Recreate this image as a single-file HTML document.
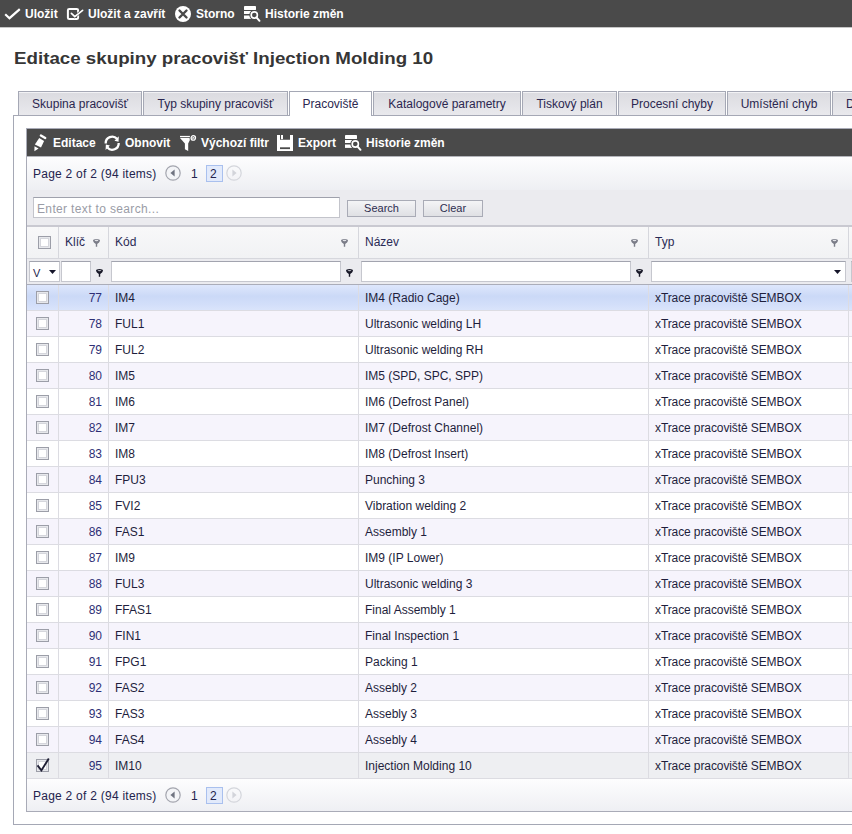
<!DOCTYPE html><html><head><meta charset="utf-8"><style>
*{box-sizing:border-box;margin:0;padding:0}
html,body{width:852px;height:834px;overflow:hidden;background:#fff;font-family:"Liberation Sans",sans-serif;position:relative}
.a{position:absolute}
svg{position:absolute;overflow:visible}
#topbar{left:0;top:0;width:852px;height:28px;background:#4a4a4a;border-bottom:1px solid #c6c6c6}
.tb{position:absolute;color:#fff;font-weight:bold;font-size:12px;line-height:14px;white-space:nowrap}
h1{position:absolute;left:14px;top:48px;font-size:17px;font-weight:bold;color:#363636;white-space:nowrap;line-height:22px;transform:scaleX(1.102);transform-origin:0 0}
.tab{position:absolute;top:91px;height:24px;border:1px solid #a5a8b5;border-bottom:none;background:linear-gradient(#dbdbe0,#e9e9ed);font-size:12px;color:#2b2750;text-align:center;line-height:24px;white-space:nowrap;box-shadow:inset 0 1px 0 #f2f2f5}
.tab.act{background:#fff;box-shadow:none;height:25px}
#panel{left:13px;top:115px;width:900px;height:710px;border:1px solid #a5a8b5;background:#fff}
#grid{left:26px;top:128px;width:900px;height:684px;border:1px solid #a9abb7;border-right:none;background:#fff;overflow:hidden}
#gtool{left:0;top:0;width:100%;height:28px;background:#4a4a4a;border-bottom:1px solid #b4b5bb}
.gt{position:absolute;color:#fff;font-weight:bold;font-size:12px;line-height:14px;white-space:nowrap;top:7px}
.pager{position:absolute;left:0;width:100%;background:linear-gradient(#fdfdfe,#eeeff3)}
.ptxt{position:absolute;font-size:12px;color:#23234d;white-space:nowrap;line-height:14px}
.ph{letter-spacing:0.35px}
.pl{letter-spacing:0.25px}
#search{left:0;top:61px;width:100%;height:37px;background:#ebebef;border-bottom:2px solid #c9c9d1}
#hdr{left:0;top:98px;width:100%;height:32px;background:linear-gradient(#f8f8f9,#f1f2f4);border-bottom:1px solid #d6d7dd}
#flt{left:0;top:130px;width:100%;height:26px;background:#ebebef;border-bottom:1px solid #abadb9}
.row{position:absolute;left:0;width:100%;height:26px;border-bottom:1px solid #dcdce2}
.c{position:absolute;top:0;height:25px;font-size:12px;color:#1e1e3c;line-height:27px;white-space:nowrap;border-right:1px solid #dcdce2;overflow:hidden}
.hc{position:absolute;top:0;height:31px;font-size:12px;color:#2a2a55;line-height:31px;white-space:nowrap;border-right:1px solid #d6d7dd}
.fb{position:absolute;top:2px;height:21px;background:#fff;border:1px solid #c6c7ce;border-top-color:#a2a4af}
.cb{position:absolute;width:13px;height:13px;border:1px solid #9c9ea8;background:#fff;box-shadow:inset 0 0 0 1px #e7e8ec,inset 0 0 0 2px #d5d6dc}
.btn{position:absolute;top:10px;height:17px;border:1px solid #a9abb6;background:linear-gradient(#f4f4f6,#dfe0e4);font-size:11px;color:#2e2e50;text-align:center;line-height:15px}
</style></head><body>
<div id="topbar" class="a"></div>
<svg style="left:4px;top:8px" width="17" height="12" viewBox="0 0 17 12"><path d="M1.2 6.2 L5.5 10.2 L15.8 1.2" fill="none" stroke="#fff" stroke-width="2.2"/></svg>
<svg style="left:66px;top:7px" width="18" height="14" viewBox="0 0 18 14"><rect x="1.9" y="1.9" width="10.2" height="10.2" rx="1.4" fill="none" stroke="#fff" stroke-width="2"/><path d="M5.4 6.4 L8.8 9.6 L16.6 3.4" fill="none" stroke="#4a4a4a" stroke-width="2.9"/><path d="M5.4 6.4 L8.8 9.6 L16.6 3.4" fill="none" stroke="#fff" stroke-width="1.7" stroke-linecap="round"/></svg>
<svg style="left:175px;top:6px" width="16" height="16" viewBox="0 0 16 16"><circle cx="8" cy="8" r="8" fill="#fff"/><path d="M4.5 4.5 L11.5 11.5 M11.5 4.5 L4.5 11.5" stroke="#4a4a4a" stroke-width="2.4" stroke-linecap="round"/></svg>
<svg style="left:243px;top:5px" width="18" height="18" viewBox="0 0 18 18"><rect x="1" y="1" width="12" height="3.9" rx="0.4" fill="#fff"/><rect x="1" y="6" width="7" height="3" fill="#fff"/><rect x="1" y="10.5" width="7" height="3.4" fill="#fff"/><circle cx="11.3" cy="10" r="5" fill="#4a4a4a"/><circle cx="11.3" cy="10" r="3.1" fill="none" stroke="#fff" stroke-width="1.6"/><path d="M13.4 12.3 L16.5 15.8" stroke="#fff" stroke-width="2" stroke-linecap="round"/></svg>
<div class="tb" style="left:25px;top:7px">Uložit</div>
<div class="tb" style="left:88px;top:7px">Uložit a zavřít</div>
<div class="tb" style="left:196px;top:7px">Storno</div>
<div class="tb" style="left:265px;top:7px">Historie změn</div>
<h1>Editace skupiny pracovišť Injection Molding 10</h1>
<div id="panel" class="a"></div>
<div class="tab" style="left:18px;width:124px">Skupina pracovišť</div>
<div class="tab" style="left:143px;width:145px">Typ skupiny pracovišť</div>
<div class="tab act" style="left:289px;width:83px">Pracoviště</div>
<div class="tab" style="left:373px;width:148px">Katalogové parametry</div>
<div class="tab" style="left:522px;width:95px">Tiskový plán</div>
<div class="tab" style="left:618px;width:108px">Procesní chyby</div>
<div class="tab" style="left:727px;width:104px">Umístění chyb</div>
<div class="tab" style="left:832px;width:104px;text-align:left;padding-left:13px">Dokumenty</div>
<div id="grid" class="a">
<div id="gtool" class="a"></div>
<svg style="left:5px;top:4px" width="16" height="20" viewBox="0 0 16 20"><path d="M7.2 4.9 L12.1 8.1 L9 14.4 L2.9 11.5 Z" fill="#fff"/><path d="M8.9 2.5 L13.2 5" stroke="#fff" stroke-width="2.4" stroke-linecap="round"/><path d="M2.5 13.2 L6.6 15.6 L2.4 18.2 Z" fill="#fff"/></svg>
<svg style="left:77px;top:6px" width="17" height="17" viewBox="0 0 17 17"><path d="M1.70 8.43 A6.5 6.5 0 0 1 13.03 3.85 M14.70 7.97 A6.5 6.5 0 0 1 3.37 12.55" fill="none" stroke="#fff" stroke-width="2.3"/><path d="M10.49 5.83 L14.80 1.37 L14.56 6.85 Z M5.91 10.57 L1.60 15.03 L1.84 9.55 Z" fill="#fff"/></svg>
<svg style="left:152px;top:5px" width="18" height="18" viewBox="0 0 18 18"><rect x="1" y="1.9" width="10" height="1.3" fill="#fff"/><path d="M1 4 H10.8 V6.3 L9.2 9.5 V17 L5.9 15.2 V9.5 Z" fill="#fff"/><circle cx="14.3" cy="3.9" r="3.6" fill="#4a4a4a"/><circle cx="14.3" cy="3.9" r="2.2" fill="none" stroke="#fff" stroke-width="1.3"/><path d="M13.3 2.9 L15.3 4.9 M15.3 2.9 L13.3 4.9" stroke="#fff" stroke-width="0.9"/></svg>
<svg style="left:250px;top:6px" width="16" height="16" viewBox="0 0 16 16"><path d="M0 0 H3 V4.8 H13 V0 H16 V16 H0 Z" fill="#fff"/><rect x="4" y="0" width="2" height="4.2" fill="#fff"/><rect x="3" y="12.3" width="10" height="1.8" fill="#4a4a4a"/></svg>
<svg style="left:317px;top:5px" width="18" height="18" viewBox="0 0 18 18"><rect x="1" y="1" width="12" height="3.9" rx="0.4" fill="#fff"/><rect x="1" y="6" width="7" height="3" fill="#fff"/><rect x="1" y="10.5" width="7" height="3.4" fill="#fff"/><circle cx="11.3" cy="10" r="5" fill="#4a4a4a"/><circle cx="11.3" cy="10" r="3.1" fill="none" stroke="#fff" stroke-width="1.6"/><path d="M13.4 12.3 L16.5 15.8" stroke="#fff" stroke-width="2" stroke-linecap="round"/></svg>
<div class="gt" style="left:26px">Editace</div>
<div class="gt" style="left:98px">Obnovit</div>
<div class="gt" style="left:174px">Výchozí filtr</div>
<div class="gt" style="left:271px">Export</div>
<div class="gt" style="left:339px">Historie změn</div>
<svg width="0" height="0"><defs><linearGradient id="cg" x1="0" y1="0" x2="0" y2="1"><stop offset="0" stop-color="#fff"/><stop offset="1" stop-color="#e4e5ea"/></linearGradient></defs></svg>
<div class="pager" style="top:28px;height:33px"><div class="ptxt pl" style="left:6px;top:10px">Page 2 of 2 (94 items)</div><svg style="left:138px;top:8px" width="16" height="16" viewBox="0 0 16 16"><circle cx="8" cy="8" r="7.2" fill="#f3f4f7" stroke="#a3a5ae" stroke-width="1.2"/><path d="M9.6 4.6 V11.4 L5.4 8 Z" fill="#6f7380"/></svg><div class="ptxt" style="left:164px;top:10px">1</div><div class="a" style="left:179px;top:8px;width:17px;height:17px;background:#e2eafb;border:1px solid #a9c0ee"></div><div class="ptxt" style="left:183px;top:10px">2</div><svg style="left:199px;top:8px" width="16" height="16" viewBox="0 0 16 16"><circle cx="8" cy="8" r="7.2" fill="none" stroke="#d4d6dc" stroke-width="1.2"/><path d="M6.4 4.6 V11.4 L10.6 8 Z" fill="#d2d4da"/></svg></div>
<div id="search" class="a">
<div class="a" style="left:6px;top:7px;width:307px;height:21px;background:#fff;border:1px solid #c3c4cb;border-top-color:#9fa1ac"></div>
<div class="ptxt ph" style="left:10px;top:12px;color:#9a9ca6">Enter text to search...</div>
<div class="btn" style="left:320px;width:69px">Search</div>
<div class="btn" style="left:396px;width:60px">Clear</div>
</div>
<div id="hdr" class="a">
<div class="hc" style="left:0px;width:32px;padding-left:6px"></div>
<div class="hc" style="left:32px;width:50px;padding-left:6px">Klíč</div>
<div class="hc" style="left:82px;width:250px;padding-left:6px">Kód</div>
<div class="hc" style="left:332px;width:290px;padding-left:6px">Název</div>
<div class="hc" style="left:622px;width:200px;padding-left:6px">Typ</div>
<div class="hc" style="left:822px;width:100px;padding-left:6px"></div>
<div class="cb" style="left:11px;top:9px"></div>
</div>
<svg class="a" style="left:66.0px;top:110px" width="7" height="8" viewBox="0 0 7 8"><path d="M0 1.8 A3.5 1.7 0 0 1 7 1.8 Q6.6 3.6 4.2 4.9 V7.8 H2.8 V4.9 Q0.4 3.6 0 1.8 Z" fill="#7b7d88"/><ellipse cx="3.5" cy="1.6" rx="1.9" ry="0.75" fill="#e2e3e7"/></svg>
<svg class="a" style="left:314.0px;top:110px" width="7" height="8" viewBox="0 0 7 8"><path d="M0 1.8 A3.5 1.7 0 0 1 7 1.8 Q6.6 3.6 4.2 4.9 V7.8 H2.8 V4.9 Q0.4 3.6 0 1.8 Z" fill="#7b7d88"/><ellipse cx="3.5" cy="1.6" rx="1.9" ry="0.75" fill="#e2e3e7"/></svg>
<svg class="a" style="left:604.0px;top:110px" width="7" height="8" viewBox="0 0 7 8"><path d="M0 1.8 A3.5 1.7 0 0 1 7 1.8 Q6.6 3.6 4.2 4.9 V7.8 H2.8 V4.9 Q0.4 3.6 0 1.8 Z" fill="#7b7d88"/><ellipse cx="3.5" cy="1.6" rx="1.9" ry="0.75" fill="#e2e3e7"/></svg>
<svg class="a" style="left:804.0px;top:110px" width="7" height="8" viewBox="0 0 7 8"><path d="M0 1.8 A3.5 1.7 0 0 1 7 1.8 Q6.6 3.6 4.2 4.9 V7.8 H2.8 V4.9 Q0.4 3.6 0 1.8 Z" fill="#7b7d88"/><ellipse cx="3.5" cy="1.6" rx="1.9" ry="0.75" fill="#e2e3e7"/></svg>
<div id="flt" class="a">
<div class="fb" style="left:2px;width:31px"></div>
<div class="ptxt" style="left:6px;top:7px;font-size:11px">V</div>
<svg class="a" style="left:22px;top:11px" width="7" height="4" viewBox="0 0 7 4"><path d="M0 0 H7 L3.5 4 Z" fill="#15152a"/></svg>
<div class="fb" style="left:34px;width:30px"></div>
<div class="fb" style="left:84px;width:230px"></div>
<div class="fb" style="left:334px;width:270px"></div>
<div class="fb" style="left:624px;width:195px"></div>
<div class="fb" style="left:824px;width:100px"></div>
<svg class="a" style="left:807px;top:11px" width="7" height="4" viewBox="0 0 7 4"><path d="M0 0 H7 L3.5 4 Z" fill="#15152a"/></svg>
</div>
<svg class="a" style="left:69.0px;top:140px" width="7" height="8" viewBox="0 0 7 8"><path d="M0 1.8 A3.5 1.7 0 0 1 7 1.8 Q6.6 3.6 4.2 4.9 V7.8 H2.8 V4.9 Q0.4 3.6 0 1.8 Z" fill="#171726"/><ellipse cx="3.5" cy="1.6" rx="1.9" ry="0.7" fill="#b9bac2"/></svg>
<svg class="a" style="left:319.0px;top:140px" width="7" height="8" viewBox="0 0 7 8"><path d="M0 1.8 A3.5 1.7 0 0 1 7 1.8 Q6.6 3.6 4.2 4.9 V7.8 H2.8 V4.9 Q0.4 3.6 0 1.8 Z" fill="#171726"/><ellipse cx="3.5" cy="1.6" rx="1.9" ry="0.7" fill="#b9bac2"/></svg>
<svg class="a" style="left:609.0px;top:140px" width="7" height="8" viewBox="0 0 7 8"><path d="M0 1.8 A3.5 1.7 0 0 1 7 1.8 Q6.6 3.6 4.2 4.9 V7.8 H2.8 V4.9 Q0.4 3.6 0 1.8 Z" fill="#171726"/><ellipse cx="3.5" cy="1.6" rx="1.9" ry="0.7" fill="#b9bac2"/></svg>
<div class="row" style="top:156px;background:linear-gradient(#dee7fc,#cbd9f7 45%,#d3dffa 80%,#dae4fb)">
<div class="c" style="left:0px;width:32px;padding-left:6px"></div>
<div class="c" style="left:32px;width:50px;text-align:right;padding-right:6px;color:#2e2f75">77</div>
<div class="c" style="left:82px;width:250px;padding-left:6px">IM4</div>
<div class="c" style="left:332px;width:290px;padding-left:6px">IM4 (Radio Cage)</div>
<div class="c" style="left:622px;width:200px;padding-left:6px;letter-spacing:-0.1px">xTrace pracoviště SEMBOX</div>
<div class="c" style="left:822px;width:100px;padding-left:6px"></div>
<div class="cb" style="left:9px;top:6px"></div>
</div>
<div class="row" style="top:182px;background:#f6f4fc">
<div class="c" style="left:0px;width:32px;padding-left:6px"></div>
<div class="c" style="left:32px;width:50px;text-align:right;padding-right:6px;color:#2e2f75">78</div>
<div class="c" style="left:82px;width:250px;padding-left:6px">FUL1</div>
<div class="c" style="left:332px;width:290px;padding-left:6px">Ultrasonic welding LH</div>
<div class="c" style="left:622px;width:200px;padding-left:6px;letter-spacing:-0.1px">xTrace pracoviště SEMBOX</div>
<div class="c" style="left:822px;width:100px;padding-left:6px"></div>
<div class="cb" style="left:9px;top:6px"></div>
</div>
<div class="row" style="top:208px;background:#fff">
<div class="c" style="left:0px;width:32px;padding-left:6px"></div>
<div class="c" style="left:32px;width:50px;text-align:right;padding-right:6px;color:#2e2f75">79</div>
<div class="c" style="left:82px;width:250px;padding-left:6px">FUL2</div>
<div class="c" style="left:332px;width:290px;padding-left:6px">Ultrasonic welding RH</div>
<div class="c" style="left:622px;width:200px;padding-left:6px;letter-spacing:-0.1px">xTrace pracoviště SEMBOX</div>
<div class="c" style="left:822px;width:100px;padding-left:6px"></div>
<div class="cb" style="left:9px;top:6px"></div>
</div>
<div class="row" style="top:234px;background:#f6f4fc">
<div class="c" style="left:0px;width:32px;padding-left:6px"></div>
<div class="c" style="left:32px;width:50px;text-align:right;padding-right:6px;color:#2e2f75">80</div>
<div class="c" style="left:82px;width:250px;padding-left:6px">IM5</div>
<div class="c" style="left:332px;width:290px;padding-left:6px">IM5 (SPD, SPC, SPP)</div>
<div class="c" style="left:622px;width:200px;padding-left:6px;letter-spacing:-0.1px">xTrace pracoviště SEMBOX</div>
<div class="c" style="left:822px;width:100px;padding-left:6px"></div>
<div class="cb" style="left:9px;top:6px"></div>
</div>
<div class="row" style="top:260px;background:#fff">
<div class="c" style="left:0px;width:32px;padding-left:6px"></div>
<div class="c" style="left:32px;width:50px;text-align:right;padding-right:6px;color:#2e2f75">81</div>
<div class="c" style="left:82px;width:250px;padding-left:6px">IM6</div>
<div class="c" style="left:332px;width:290px;padding-left:6px">IM6 (Defrost Panel)</div>
<div class="c" style="left:622px;width:200px;padding-left:6px;letter-spacing:-0.1px">xTrace pracoviště SEMBOX</div>
<div class="c" style="left:822px;width:100px;padding-left:6px"></div>
<div class="cb" style="left:9px;top:6px"></div>
</div>
<div class="row" style="top:286px;background:#f6f4fc">
<div class="c" style="left:0px;width:32px;padding-left:6px"></div>
<div class="c" style="left:32px;width:50px;text-align:right;padding-right:6px;color:#2e2f75">82</div>
<div class="c" style="left:82px;width:250px;padding-left:6px">IM7</div>
<div class="c" style="left:332px;width:290px;padding-left:6px">IM7 (Defrost Channel)</div>
<div class="c" style="left:622px;width:200px;padding-left:6px;letter-spacing:-0.1px">xTrace pracoviště SEMBOX</div>
<div class="c" style="left:822px;width:100px;padding-left:6px"></div>
<div class="cb" style="left:9px;top:6px"></div>
</div>
<div class="row" style="top:312px;background:#fff">
<div class="c" style="left:0px;width:32px;padding-left:6px"></div>
<div class="c" style="left:32px;width:50px;text-align:right;padding-right:6px;color:#2e2f75">83</div>
<div class="c" style="left:82px;width:250px;padding-left:6px">IM8</div>
<div class="c" style="left:332px;width:290px;padding-left:6px">IM8 (Defrost Insert)</div>
<div class="c" style="left:622px;width:200px;padding-left:6px;letter-spacing:-0.1px">xTrace pracoviště SEMBOX</div>
<div class="c" style="left:822px;width:100px;padding-left:6px"></div>
<div class="cb" style="left:9px;top:6px"></div>
</div>
<div class="row" style="top:338px;background:#f6f4fc">
<div class="c" style="left:0px;width:32px;padding-left:6px"></div>
<div class="c" style="left:32px;width:50px;text-align:right;padding-right:6px;color:#2e2f75">84</div>
<div class="c" style="left:82px;width:250px;padding-left:6px">FPU3</div>
<div class="c" style="left:332px;width:290px;padding-left:6px">Punching 3</div>
<div class="c" style="left:622px;width:200px;padding-left:6px;letter-spacing:-0.1px">xTrace pracoviště SEMBOX</div>
<div class="c" style="left:822px;width:100px;padding-left:6px"></div>
<div class="cb" style="left:9px;top:6px"></div>
</div>
<div class="row" style="top:364px;background:#fff">
<div class="c" style="left:0px;width:32px;padding-left:6px"></div>
<div class="c" style="left:32px;width:50px;text-align:right;padding-right:6px;color:#2e2f75">85</div>
<div class="c" style="left:82px;width:250px;padding-left:6px">FVI2</div>
<div class="c" style="left:332px;width:290px;padding-left:6px">Vibration welding 2</div>
<div class="c" style="left:622px;width:200px;padding-left:6px;letter-spacing:-0.1px">xTrace pracoviště SEMBOX</div>
<div class="c" style="left:822px;width:100px;padding-left:6px"></div>
<div class="cb" style="left:9px;top:6px"></div>
</div>
<div class="row" style="top:390px;background:#f6f4fc">
<div class="c" style="left:0px;width:32px;padding-left:6px"></div>
<div class="c" style="left:32px;width:50px;text-align:right;padding-right:6px;color:#2e2f75">86</div>
<div class="c" style="left:82px;width:250px;padding-left:6px">FAS1</div>
<div class="c" style="left:332px;width:290px;padding-left:6px">Assembly 1</div>
<div class="c" style="left:622px;width:200px;padding-left:6px;letter-spacing:-0.1px">xTrace pracoviště SEMBOX</div>
<div class="c" style="left:822px;width:100px;padding-left:6px"></div>
<div class="cb" style="left:9px;top:6px"></div>
</div>
<div class="row" style="top:416px;background:#fff">
<div class="c" style="left:0px;width:32px;padding-left:6px"></div>
<div class="c" style="left:32px;width:50px;text-align:right;padding-right:6px;color:#2e2f75">87</div>
<div class="c" style="left:82px;width:250px;padding-left:6px">IM9</div>
<div class="c" style="left:332px;width:290px;padding-left:6px">IM9 (IP Lower)</div>
<div class="c" style="left:622px;width:200px;padding-left:6px;letter-spacing:-0.1px">xTrace pracoviště SEMBOX</div>
<div class="c" style="left:822px;width:100px;padding-left:6px"></div>
<div class="cb" style="left:9px;top:6px"></div>
</div>
<div class="row" style="top:442px;background:#f6f4fc">
<div class="c" style="left:0px;width:32px;padding-left:6px"></div>
<div class="c" style="left:32px;width:50px;text-align:right;padding-right:6px;color:#2e2f75">88</div>
<div class="c" style="left:82px;width:250px;padding-left:6px">FUL3</div>
<div class="c" style="left:332px;width:290px;padding-left:6px">Ultrasonic welding 3</div>
<div class="c" style="left:622px;width:200px;padding-left:6px;letter-spacing:-0.1px">xTrace pracoviště SEMBOX</div>
<div class="c" style="left:822px;width:100px;padding-left:6px"></div>
<div class="cb" style="left:9px;top:6px"></div>
</div>
<div class="row" style="top:468px;background:#fff">
<div class="c" style="left:0px;width:32px;padding-left:6px"></div>
<div class="c" style="left:32px;width:50px;text-align:right;padding-right:6px;color:#2e2f75">89</div>
<div class="c" style="left:82px;width:250px;padding-left:6px">FFAS1</div>
<div class="c" style="left:332px;width:290px;padding-left:6px">Final Assembly 1</div>
<div class="c" style="left:622px;width:200px;padding-left:6px;letter-spacing:-0.1px">xTrace pracoviště SEMBOX</div>
<div class="c" style="left:822px;width:100px;padding-left:6px"></div>
<div class="cb" style="left:9px;top:6px"></div>
</div>
<div class="row" style="top:494px;background:#f6f4fc">
<div class="c" style="left:0px;width:32px;padding-left:6px"></div>
<div class="c" style="left:32px;width:50px;text-align:right;padding-right:6px;color:#2e2f75">90</div>
<div class="c" style="left:82px;width:250px;padding-left:6px">FIN1</div>
<div class="c" style="left:332px;width:290px;padding-left:6px">Final Inspection 1</div>
<div class="c" style="left:622px;width:200px;padding-left:6px;letter-spacing:-0.1px">xTrace pracoviště SEMBOX</div>
<div class="c" style="left:822px;width:100px;padding-left:6px"></div>
<div class="cb" style="left:9px;top:6px"></div>
</div>
<div class="row" style="top:520px;background:#fff">
<div class="c" style="left:0px;width:32px;padding-left:6px"></div>
<div class="c" style="left:32px;width:50px;text-align:right;padding-right:6px;color:#2e2f75">91</div>
<div class="c" style="left:82px;width:250px;padding-left:6px">FPG1</div>
<div class="c" style="left:332px;width:290px;padding-left:6px">Packing 1</div>
<div class="c" style="left:622px;width:200px;padding-left:6px;letter-spacing:-0.1px">xTrace pracoviště SEMBOX</div>
<div class="c" style="left:822px;width:100px;padding-left:6px"></div>
<div class="cb" style="left:9px;top:6px"></div>
</div>
<div class="row" style="top:546px;background:#f6f4fc">
<div class="c" style="left:0px;width:32px;padding-left:6px"></div>
<div class="c" style="left:32px;width:50px;text-align:right;padding-right:6px;color:#2e2f75">92</div>
<div class="c" style="left:82px;width:250px;padding-left:6px">FAS2</div>
<div class="c" style="left:332px;width:290px;padding-left:6px">Assebly 2</div>
<div class="c" style="left:622px;width:200px;padding-left:6px;letter-spacing:-0.1px">xTrace pracoviště SEMBOX</div>
<div class="c" style="left:822px;width:100px;padding-left:6px"></div>
<div class="cb" style="left:9px;top:6px"></div>
</div>
<div class="row" style="top:572px;background:#fff">
<div class="c" style="left:0px;width:32px;padding-left:6px"></div>
<div class="c" style="left:32px;width:50px;text-align:right;padding-right:6px;color:#2e2f75">93</div>
<div class="c" style="left:82px;width:250px;padding-left:6px">FAS3</div>
<div class="c" style="left:332px;width:290px;padding-left:6px">Assebly 3</div>
<div class="c" style="left:622px;width:200px;padding-left:6px;letter-spacing:-0.1px">xTrace pracoviště SEMBOX</div>
<div class="c" style="left:822px;width:100px;padding-left:6px"></div>
<div class="cb" style="left:9px;top:6px"></div>
</div>
<div class="row" style="top:598px;background:#f6f4fc">
<div class="c" style="left:0px;width:32px;padding-left:6px"></div>
<div class="c" style="left:32px;width:50px;text-align:right;padding-right:6px;color:#2e2f75">94</div>
<div class="c" style="left:82px;width:250px;padding-left:6px">FAS4</div>
<div class="c" style="left:332px;width:290px;padding-left:6px">Assebly 4</div>
<div class="c" style="left:622px;width:200px;padding-left:6px;letter-spacing:-0.1px">xTrace pracoviště SEMBOX</div>
<div class="c" style="left:822px;width:100px;padding-left:6px"></div>
<div class="cb" style="left:9px;top:6px"></div>
</div>
<div class="row" style="top:624px;background:#eeeff2">
<div class="c" style="left:0px;width:32px;padding-left:6px"></div>
<div class="c" style="left:32px;width:50px;text-align:right;padding-right:6px;color:#2e2f75">95</div>
<div class="c" style="left:82px;width:250px;padding-left:6px">IM10</div>
<div class="c" style="left:332px;width:290px;padding-left:6px">Injection Molding 10</div>
<div class="c" style="left:622px;width:200px;padding-left:6px;letter-spacing:-0.1px">xTrace pracoviště SEMBOX</div>
<div class="c" style="left:822px;width:100px;padding-left:6px"></div>
<div class="cb" style="left:9px;top:6px"></div>
<svg style="left:9px;top:5px" width="14" height="14" viewBox="0 0 14 14"><path d="M1.5 7.4 L5.4 12.4 L12.8 0.5" fill="none" stroke="#1f1f35" stroke-width="1.9"/></svg>
</div>
<div class="pager" style="top:650px;height:33px"><div class="ptxt pl" style="left:6px;top:10px">Page 2 of 2 (94 items)</div><svg style="left:138px;top:8px" width="16" height="16" viewBox="0 0 16 16"><circle cx="8" cy="8" r="7.2" fill="#f3f4f7" stroke="#a3a5ae" stroke-width="1.2"/><path d="M9.6 4.6 V11.4 L5.4 8 Z" fill="#6f7380"/></svg><div class="ptxt" style="left:164px;top:10px">1</div><div class="a" style="left:179px;top:8px;width:17px;height:17px;background:#e2eafb;border:1px solid #a9c0ee"></div><div class="ptxt" style="left:183px;top:10px">2</div><svg style="left:199px;top:8px" width="16" height="16" viewBox="0 0 16 16"><circle cx="8" cy="8" r="7.2" fill="none" stroke="#d4d6dc" stroke-width="1.2"/><path d="M6.4 4.6 V11.4 L10.6 8 Z" fill="#d2d4da"/></svg></div>
</div>
</body></html>
